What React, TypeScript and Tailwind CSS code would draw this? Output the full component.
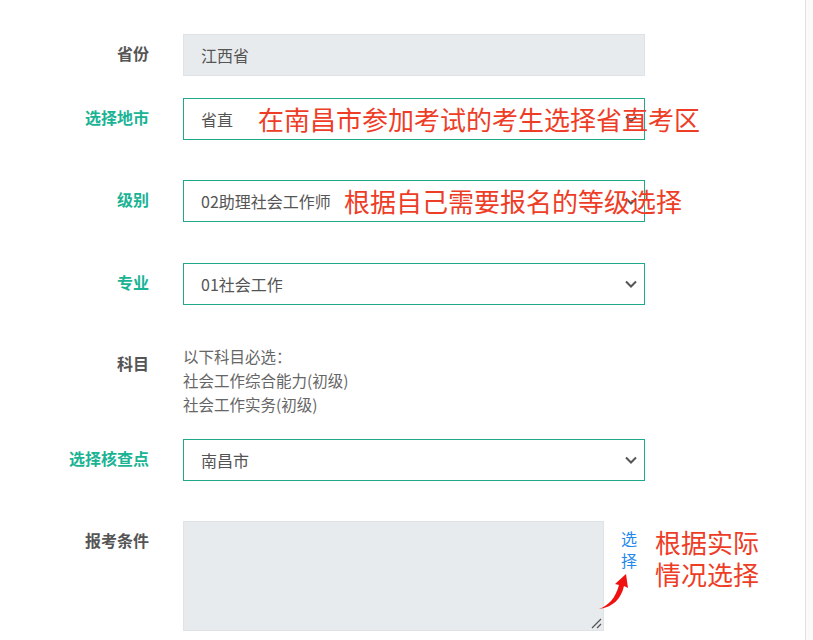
import React from "react";

const FONT = { fontFamily: '"Microsoft YaHei", "Noto Sans CJK SC", "Noto Sans", sans-serif' };

function Chevron() {
  return (
    <svg width="14" height="9" viewBox="0 0 14 9" className="absolute right-[6px] top-1/2 -translate-y-1/2">
      <path d="M2 2 L7 7 L12 2" fill="none" stroke="#555" strokeWidth="2" />
    </svg>
  );
}

function Label({ children, teal }: { children: React.ReactNode; teal?: boolean }) {
  return (
    <div
      className={`w-[149px] shrink-0 pt-[9px] text-right text-[16px] font-bold leading-[20px] ${
        teal ? "text-[#1ab394]" : "text-[#555]"
      }`}
    >
      {children}
    </div>
  );
}

function Select({ value, note, left }: { value: string; note?: string; left?: number }) {
  return (
    <div className="relative h-[42px] w-[462px] border border-[#1fa889] bg-white">
      <div className="pl-[17px] text-[16px] leading-[40px] text-[#555]">{value}</div>
      <Chevron />
      {note && (
        <div
          className="absolute top-1/2 -translate-y-1/2 whitespace-nowrap text-[26px] leading-[32px] text-[#ee3d27]"
          style={{ left }}
        >
          {note}
        </div>
      )}
    </div>
  );
}

export default function App() {
  return (
    <div className="min-h-[640px] w-[813px] bg-[#fafafa]" style={FONT}>
      <div className="min-h-[640px] w-[806px] border-r border-[#e3e3e3] bg-white pt-[34px]">
        <div className="flex gap-[34px]">
          <Label>省份</Label>
          <div className="h-[42px] w-[462px] border border-[#dfe3e6] bg-[#e8ebee] pl-[17px] text-[16px] leading-[40px] text-[#555]">
            江西省
          </div>
        </div>

        <div className="mt-[22px] flex gap-[34px]">
          <Label teal>选择地市</Label>
          <Select value="省直" note="在南昌市参加考试的考生选择省直考区" left={74} />
        </div>

        <div className="mt-[40px] flex gap-[34px]">
          <Label teal>级别</Label>
          <Select value="02助理社会工作师" note="根据自己需要报名的等级选择" left={160} />
        </div>

        <div className="mt-[41px] flex gap-[34px]">
          <Label teal>专业</Label>
          <Select value="01社会工作" />
        </div>

        <div className="mt-[39px] flex gap-[34px]">
          <Label>科目</Label>
          <div className="text-[15.5px] leading-[24px] text-[#666]">
            <div>以下科目必选：</div>
            <div>社会工作综合能力(初级)</div>
            <div>社会工作实务(初级)</div>
          </div>
        </div>

        <div className="mt-[23px] flex gap-[34px]">
          <Label teal>选择核查点</Label>
          <Select value="南昌市" />
        </div>

        <div className="mt-[40px] flex gap-[34px]">
          <Label>报考条件</Label>
          <div className="flex">
            <div className="relative h-[110px] w-[421px] border border-[#dfe3e6] bg-[#e8ebee]">
              <svg width="12" height="12" viewBox="0 0 12 12" className="absolute bottom-[1px] right-[1px]">
                <path d="M2 11 L11 2 M7 11 L11 7" stroke="#555" strokeWidth="1.3" />
              </svg>
            </div>
            <div className="relative ml-[17px] w-[20px] pt-[6px] text-[16px] leading-[22px] text-[#1e88f0]">
              <div className="w-[16px] break-all">选择</div>
              <svg width="40" height="44" viewBox="0 0 40 44" className="absolute left-[-24px] top-[50px]">
                <path d="M2 38 C12 34 18 28 22 14 L18 13 L29 3 L31 17 L27 15 C24 28 16 36 2 38 Z" fill="#f01010" />
              </svg>
            </div>
            <div className="ml-[14px] w-[106px] pt-[5px] text-[26px] leading-[32px] text-[#ee3d27]">
              根据实际情况选择
            </div>
          </div>
        </div>
      </div>
    </div>
  );
}
